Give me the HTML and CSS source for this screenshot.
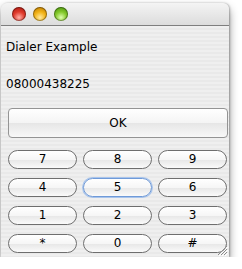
FILE: index.html
```html
<!DOCTYPE html>
<html>
<head>
<meta charset="utf-8">
<link rel="stylesheet" href="styles.css">
</head>
<body>
<div class="window">
  <div class="titlebar">
    <span class="light red"></span>
    <span class="light yellow"></span>
    <span class="light green"></span>
  </div>
  <div class="content">
    <div class="label">Dialer Example</div>
    <div class="label number">08000438225</div>
    <button class="ok">OK</button>
    <div class="keypad">
      <button class="key">7</button>
      <button class="key">8</button>
      <button class="key">9</button>
      <button class="key">4</button>
      <button class="key focus">5</button>
      <button class="key">6</button>
      <button class="key">1</button>
      <button class="key">2</button>
      <button class="key">3</button>
      <button class="key star">*</button>
      <button class="key">0</button>
      <button class="key">#</button>
    </div>
  </div>
  <svg class="grip" width="12" height="12" viewBox="0 0 12 12">
    <path d="M11 2 L2 11 M11 5 L5 11 M11 8 L8 11" stroke="#8a8a8a" stroke-width="1" fill="none"/>
    <path d="M12 3 L3 12 M12 6 L6 12 M12 9 L9 12" stroke="#ffffff" stroke-width="1" fill="none"/>
  </svg>
</div>
</body>
</html>
```

FILE: styles.css
```css
html, body {
  margin: 0;
  padding: 0;
  background: #ffffff;
}
body {
  font-family: "DejaVu Sans", "Liberation Sans", sans-serif;
  font-size: 12px;
  color: #000;
}
.window {
  position: relative;
  width: 228px;
  height: 254px;
  margin: 3px 0 0 1px;
  border-radius: 6px 6px 0 0;
  box-shadow: 0 5px 10px rgba(0,0,0,0.45), 1px 0 2px rgba(0,0,0,0.25);
  overflow: hidden;
  background: #ededed;
}
.titlebar {
  height: 22px;
  border-bottom: 1px solid #7e7e7e;
  background: linear-gradient(#f4f4f4, #dcdcdc);
  display: flex;
  align-items: center;
  gap: 7px;
  padding-left: 11px;
  border-radius: 6px 6px 0 0;
}
.light {
  width: 14px;
  height: 14px;
  border-radius: 50%;
  box-shadow: inset 0 0 0 1px rgba(0,0,0,0.35);
}
.red { background: radial-gradient(circle at 50% 75%, #ffb0a8 0, #e03a2c 45%, #a0140c 100%); }
.yellow { background: radial-gradient(circle at 50% 75%, #ffeaa0 0, #f2b216 45%, #b07000 100%); }
.green { background: radial-gradient(circle at 50% 75%, #e0ffb0 0, #84c82a 45%, #3e8a08 100%); }
.content {
  height: 231px;
  background: repeating-linear-gradient(#efefef 0 2px, #e9e9e9 2px 4px);
  padding: 13px 0 0 5px;
  box-sizing: border-box;
}
.label {
  height: 16px;
  line-height: 16px;
}
.number {
  margin-top: 21px;
}
.ok {
  display: block;
  width: 220px;
  height: 30px;
  margin: 16px 0 0 2px;
  border: 1px solid #949494;
  border-radius: 4px;
  background: linear-gradient(#ffffff 0%, #f4f4f4 50%, #e6e6e6 51%, #f8f8f8 100%);
  font: 12px "DejaVu Sans", sans-serif;
  color: #000;
  padding: 0;
}
.keypad {
  display: grid;
  grid-template-columns: repeat(3, 69px);
  column-gap: 6px;
  row-gap: 9px;
  margin: 12px 0 0 2px;
}
.key {
  height: 19px;
  border: 1px solid #6e6e6e;
  border-radius: 10px;
  background: linear-gradient(#ffffff 0%, #f6f6f6 50%, #e8e8e8 55%, #fafafa 100%);
  font: 12px "DejaVu Sans", sans-serif;
  color: #000;
  padding: 0;
  line-height: 17px;
}
.key.focus {
  border-color: #6f9ad8;
  box-shadow: 0 0 0 1px #a8c4ec;
}
.grip {
  position: absolute;
  right: 1px;
  bottom: 1px;
}
```
